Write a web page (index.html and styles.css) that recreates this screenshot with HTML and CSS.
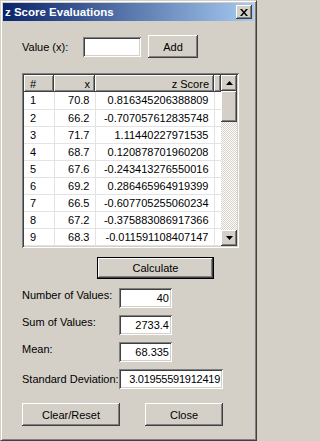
FILE: index.html
```html
<!DOCTYPE html>
<html>
<head>
<meta charset="utf-8">
<title>z Score Evaluations</title>
<link rel="stylesheet" href="styles.css">
</head>
<body>
<div class="window">
  <div class="titlebar">
    <span class="title">z Score Evaluations</span>
    <button class="close-btn" aria-label="Close">
      <svg width="8" height="7" viewBox="0 0 8 7"><path d="M0 0h2l2 2.4L6 0h2L5 3.5 8 7H6L4 4.6 2 7H0l3-3.5z" fill="#000"/></svg>
    </button>
  </div>
  <div class="content">
    <div class="value-row">
      <label class="value-label">Value (x):</label>
      <input class="field value-field" type="text">
      <button class="btn add-btn">Add</button>
    </div>

    <div class="listview">
      <div class="list-area">
        <table class="grid">
          <colgroup><col class="c1"><col class="c2"><col class="c3"><col class="c4"></colgroup>
          <thead>
            <tr><th class="l">#</th><th class="r">x</th><th class="r">z Score</th><th class="filler"></th></tr>
          </thead>
          <tbody>
            <tr><td class="l">1</td><td class="r">70.8</td><td class="r">0.816345206388809</td><td class="e"></td></tr>
            <tr><td class="l">2</td><td class="r">66.2</td><td class="r">-0.707057612835748</td><td class="e"></td></tr>
            <tr><td class="l">3</td><td class="r">71.7</td><td class="r">1.11440227971535</td><td class="e"></td></tr>
            <tr><td class="l">4</td><td class="r">68.7</td><td class="r">0.120878701960208</td><td class="e"></td></tr>
            <tr><td class="l">5</td><td class="r">67.6</td><td class="r">-0.243413276550016</td><td class="e"></td></tr>
            <tr><td class="l">6</td><td class="r">69.2</td><td class="r">0.286465964919399</td><td class="e"></td></tr>
            <tr><td class="l">7</td><td class="r">66.5</td><td class="r">-0.607705255060234</td><td class="e"></td></tr>
            <tr><td class="l">8</td><td class="r">67.2</td><td class="r">-0.375883086917366</td><td class="e"></td></tr>
            <tr><td class="l">9</td><td class="r">68.3</td><td class="r">-0.011591108407147</td><td class="e"></td></tr>
          </tbody>
        </table>
      </div>
      <div class="scrollbar">
        <div class="sb-btn"><svg width="7" height="4" viewBox="0 0 7 4"><path d="M3.5 0L7 4H0z" fill="#000"/></svg></div>
        <div class="sb-thumb"></div>
        <div class="sb-track"></div>
        <div class="sb-btn"><svg width="7" height="4" viewBox="0 0 7 4"><path d="M0 0h7L3.5 4z" fill="#000"/></svg></div>
      </div>
    </div>

    <button class="btn default-btn calc-btn">Calculate</button>

    <div class="stats">
      <div class="stat-row">
        <span class="stat-label">Number of Values:</span>
        <div class="field out out-short">40</div>
      </div>
      <div class="stat-row">
        <span class="stat-label">Sum of Values:</span>
        <div class="field out out-short">2733.4</div>
      </div>
      <div class="stat-row">
        <span class="stat-label">Mean:</span>
        <div class="field out out-short">68.335</div>
      </div>
      <div class="stat-row stat-row-center">
        <span class="stat-label">Standard Deviation:</span>
        <div class="field out out-long">3.01955591912419</div>
      </div>
    </div>

    <div class="bottom-row">
      <button class="btn clear-btn">Clear/Reset</button>
      <button class="btn close-action">Close</button>
    </div>
  </div>
</div>
</body>
</html>
```
FILE: styles.css
```css
* { box-sizing: border-box; }
html, body { margin: 0; padding: 0; }
body {
  background: #d4d0c8;
  font-family: "Liberation Sans", Arial, sans-serif;
  font-size: 11px;
  color: #000;
}
.window {
  width: 257px;
  height: 441px;
  background: #d4d0c8;
  border: 1px solid;
  border-color: #d4d0c8 #404040 #404040 #d4d0c8;
  box-shadow: inset 1px 1px #fff, inset -1px -1px #808080;
  padding: 2px;
  display: flex;
  flex-direction: column;
}
.titlebar {
  height: 18px;
  flex: none;
  display: flex;
  align-items: center;
  justify-content: space-between;
  padding-left: 2px;
  padding-right: 2px;
  background: linear-gradient(to right, #0a246a, #a6caf0);
}
.title {
  color: #fff;
  font-weight: bold;
  font-size: 11.5px;
  white-space: nowrap;
}
.close-btn {
  width: 16px;
  height: 14px;
  padding: 0;
  border: none;
  background: #d4d0c8;
  box-shadow: inset -1px -1px #404040, inset 1px 1px #fff, inset -2px -2px #808080;
  display: flex;
  align-items: center;
  justify-content: center;
}
.close-btn svg { display: block; margin-left: -1px; }

.content {
  flex: 1;
  padding-left: 19px;
  display: flex;
  flex-direction: column;
  align-items: flex-start;
}

.btn {
  font-family: inherit;
  font-size: 11px;
  color: #000;
  background: #d4d0c8;
  border: none;
  padding: 0;
  box-shadow: inset -1px -1px #404040, inset 1px 1px #fff, inset -2px -2px #808080;
}
.default-btn {
  border: 1px solid #000;
}
.field {
  background: #fff;
  border: none;
  box-shadow: inset 1px 1px #808080, inset -1px -1px #fff, inset 2px 2px #404040, inset -2px -2px #d4d0c8;
  font-family: inherit;
  font-size: 11px;
  color: #000;
}

.value-row {
  margin-top: 14px;
  height: 23px;
  display: flex;
  align-items: center;
}
.value-label {
  width: 61px;
}
.value-field {
  width: 58px;
  height: 20px;
  padding: 0 3px;
  outline: none;
}
.add-btn {
  margin-left: 7px;
  width: 50px;
  height: 23px;
}

.listview {
  margin-top: 15px;
  width: 217px;
  height: 175px;
  padding: 2px;
  background: #fff;
  box-shadow: inset 1px 1px #808080, inset -1px -1px #fff, inset 2px 2px #404040, inset -2px -2px #d4d0c8;
  display: flex;
}
.list-area {
  flex: 1;
  overflow: hidden;
}
.grid {
  border-collapse: collapse;
  table-layout: fixed;
  width: 197px;
}
.grid .c1 { width: 30px; }
.grid .c2 { width: 41px; }
.grid .c3 { width: 119px; }
.grid .c4 { width: 7px; }
.grid th {
  height: 17px;
  padding: 0 6px;
  font-weight: normal;
  background: #d4d0c8;
  box-shadow: inset -1px -1px #404040, inset 1px 1px #fff, inset -2px -2px #808080;
  white-space: nowrap;
}
.grid td {
  height: 17px;
  padding: 0 6px;
  border-right: 1px solid #e3e3e3;
  border-bottom: 1px solid #e3e3e3;
  white-space: nowrap;
}
.grid td.e { border-right: none; padding: 0; }
.grid th.filler { padding: 0; }
.grid .l { text-align: left; }
.grid .r { text-align: right; padding-right: 5px; }

.scrollbar {
  width: 16px;
  flex: none;
  display: flex;
  flex-direction: column;
}
.sb-btn {
  height: 16px;
  flex: none;
  background: #d4d0c8;
  box-shadow: inset -1px -1px #404040, inset 1px 1px #fff, inset -2px -2px #808080;
  display: flex;
  align-items: center;
  justify-content: center;
}
.sb-btn svg { display: block; margin-top: -1px; }
.sb-thumb {
  height: 31px;
  flex: none;
  background: #d4d0c8;
  box-shadow: inset -1px -1px #404040, inset 1px 1px #fff, inset -2px -2px #808080;
}
.sb-track {
  flex: 1;
  background: repeating-conic-gradient(#d4d0c8 0 25%, #fff 0 50%) 0 0 / 2px 2px;
}

.calc-btn {
  margin-top: 9px;
  margin-left: 75px;
  width: 117px;
  height: 22px;
}

.stats {
  margin-top: 9px;
  display: flex;
  flex-direction: column;
  gap: 7px;
}
.stat-row {
  display: flex;
  align-items: flex-start;
  height: 20px;
}
.stat-label {
  width: 97px;
  padding-top: 1px;
  white-space: nowrap;
}
.stat-row-center { align-items: center; }
.stat-row-center .stat-label { padding-top: 0; }
.out {
  height: 20px;
  display: flex;
  align-items: center;
  justify-content: flex-end;
  padding-right: 3px;
}
.out-short { width: 53px; }
.out-long { width: 104px; letter-spacing: -0.25px; }

.bottom-row {
  margin-top: 14px;
  display: flex;
  gap: 25px;
}
.clear-btn { width: 98px; height: 23px; }
.close-action { width: 78px; height: 23px; }
```
